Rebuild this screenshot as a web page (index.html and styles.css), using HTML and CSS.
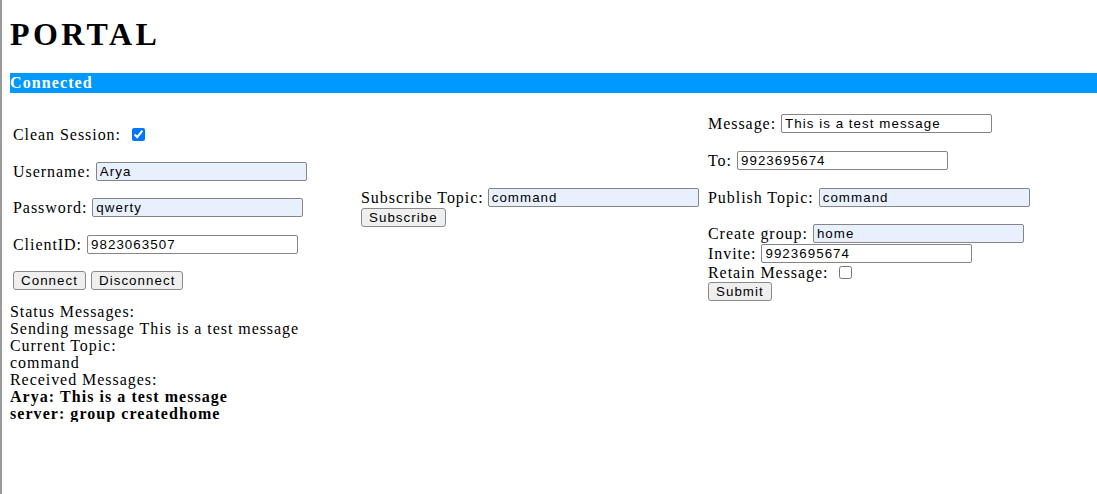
FILE: index.html
```html
<!DOCTYPE html>
<html lang="en">
<head>
<meta charset="utf-8">
<title>PORTAL</title>
<link rel="stylesheet" href="styles.css">
</head>
<body>
<h1 class="title">PORTAL</h1>
<div class="status-bar">Connected</div>

<div class="panels">
  <form class="panel panel-connect">
    <div class="row"><span class="label">Clean Session:</span><input class="check" type="checkbox" checked></div>
    <div class="row spaced"><label class="label" for="username">Username:</label><input id="username" class="field autofill" type="text" value="Arya"></div>
    <div class="row spaced"><label class="label" for="password">Password:</label><input id="password" class="field autofill" type="text" value="qwerty"></div>
    <div class="row spaced"><label class="label" for="clientid">ClientID:</label><input id="clientid" class="field" type="text" value="9823063507"></div>
    <div class="row spaced btn-row"><button class="btn" type="button">Connect</button><button class="btn" type="button">Disconnect</button></div>
  </form>

  <form class="panel panel-subscribe">
    <div class="row"><label class="label" for="subtopic">Subscribe Topic:</label><input id="subtopic" class="field autofill" type="text" value="command"></div>
    <div class="row"><button class="btn" type="button">Subscribe</button></div>
  </form>

  <form class="panel panel-publish">
    <div class="row"><label class="label" for="message">Message:</label><input id="message" class="field" type="text" value="This is a test message"></div>
    <div class="row spaced"><label class="label" for="to">To:</label><input id="to" class="field" type="text" value="9923695674"></div>
    <div class="row spaced"><label class="label" for="pubtopic">Publish Topic:</label><input id="pubtopic" class="field autofill" type="text" value="command"></div>
    <div class="row spaced-tight"><label class="label" for="group">Create group:</label><input id="group" class="field autofill" type="text" value="home"></div>
    <div class="row"><label class="label" for="invite">Invite:</label><input id="invite" class="field" type="text" value="9923695674"></div>
    <div class="row short"><span class="label">Retain Message:</span><input class="check" type="checkbox"></div>
    <div class="row"><button class="btn" type="button">Submit</button></div>
  </form>
</div>

<div class="log">
  <div>Status Messages:</div>
  <div>Sending message This is a test message</div>
  <div>Current Topic:</div>
  <div>command</div>
  <div>Received Messages:</div>
  <div class="log-msg">Arya: This is a test message</div>
  <div class="log-msg">server: group createdhome</div>
</div>
</body>
</html>
```

FILE: styles.css
```css
html {
  height: 100%;
  box-sizing: border-box;
  border-left: 2px solid #9a9a9a;
  background: #fff;
}

body {
  margin: 0 0 0 8px;
  font-family: "Liberation Serif", "Times New Roman", serif;
  font-size: 16px;
  line-height: 17px;
  letter-spacing: 0.95px;
  color: #000;
}

.title {
  margin: 16px 0 21px;
  font-size: 32px;
  line-height: 36px;
  font-weight: bold;
  letter-spacing: 3.4px;
}

.status-bar {
  height: 20px;
  line-height: 20px;
  background: #0099ff;
  color: #fff;
  font-weight: bold;
  letter-spacing: 1.1px;
}

.panels {
  display: grid;
  grid-template-columns: 348px 347px 1fr;
  align-items: center;
  margin: 20px 0 2px;
  padding-left: 3px;
}

.panel {
  display: flex;
  flex-direction: column;
  margin: 0;
}

.row {
  display: flex;
  align-items: center;
  gap: 5px;
  height: 20px;
}

.row.spaced {
  margin-top: 17px;
}

.panel-connect .row.spaced {
  margin-top: 16.5px;
}

.panel-subscribe .field {
  margin-left: -1px;
}

.row.spaced-tight {
  margin-top: 16px;
}

.row.short {
  height: 18px;
}

.row.btn-row {
  height: 19px;
  align-items: flex-start;
}

.label {
  white-space: nowrap;
}

.field {
  box-sizing: border-box;
  width: 211px;
  height: 19px;
  margin: 0;
  padding: 0 3px;
  border: 1px solid #858585;
  border-radius: 2px;
  background: #fff;
  color: #000;
  font-family: "Liberation Sans", Arial, sans-serif;
  font-size: 13.33px;
  letter-spacing: 1.05px;
  outline: none;
}

.field.autofill {
  background: #e8f0fe;
}

.btn {
  box-sizing: border-box;
  height: 19px;
  margin: 0;
  padding: 0 7px;
  border: 1px solid #8a8a8a;
  border-radius: 3px;
  background: #efefef;
  color: #000;
  font-family: "Liberation Sans", Arial, sans-serif;
  font-size: 13.33px;
  letter-spacing: 1.05px;
  line-height: 17px;
}

.check {
  width: 13px;
  height: 13px;
  margin: 0 0 0 6px;
}

.log-msg {
  font-weight: bold;
  letter-spacing: 1.05px;
}
```
